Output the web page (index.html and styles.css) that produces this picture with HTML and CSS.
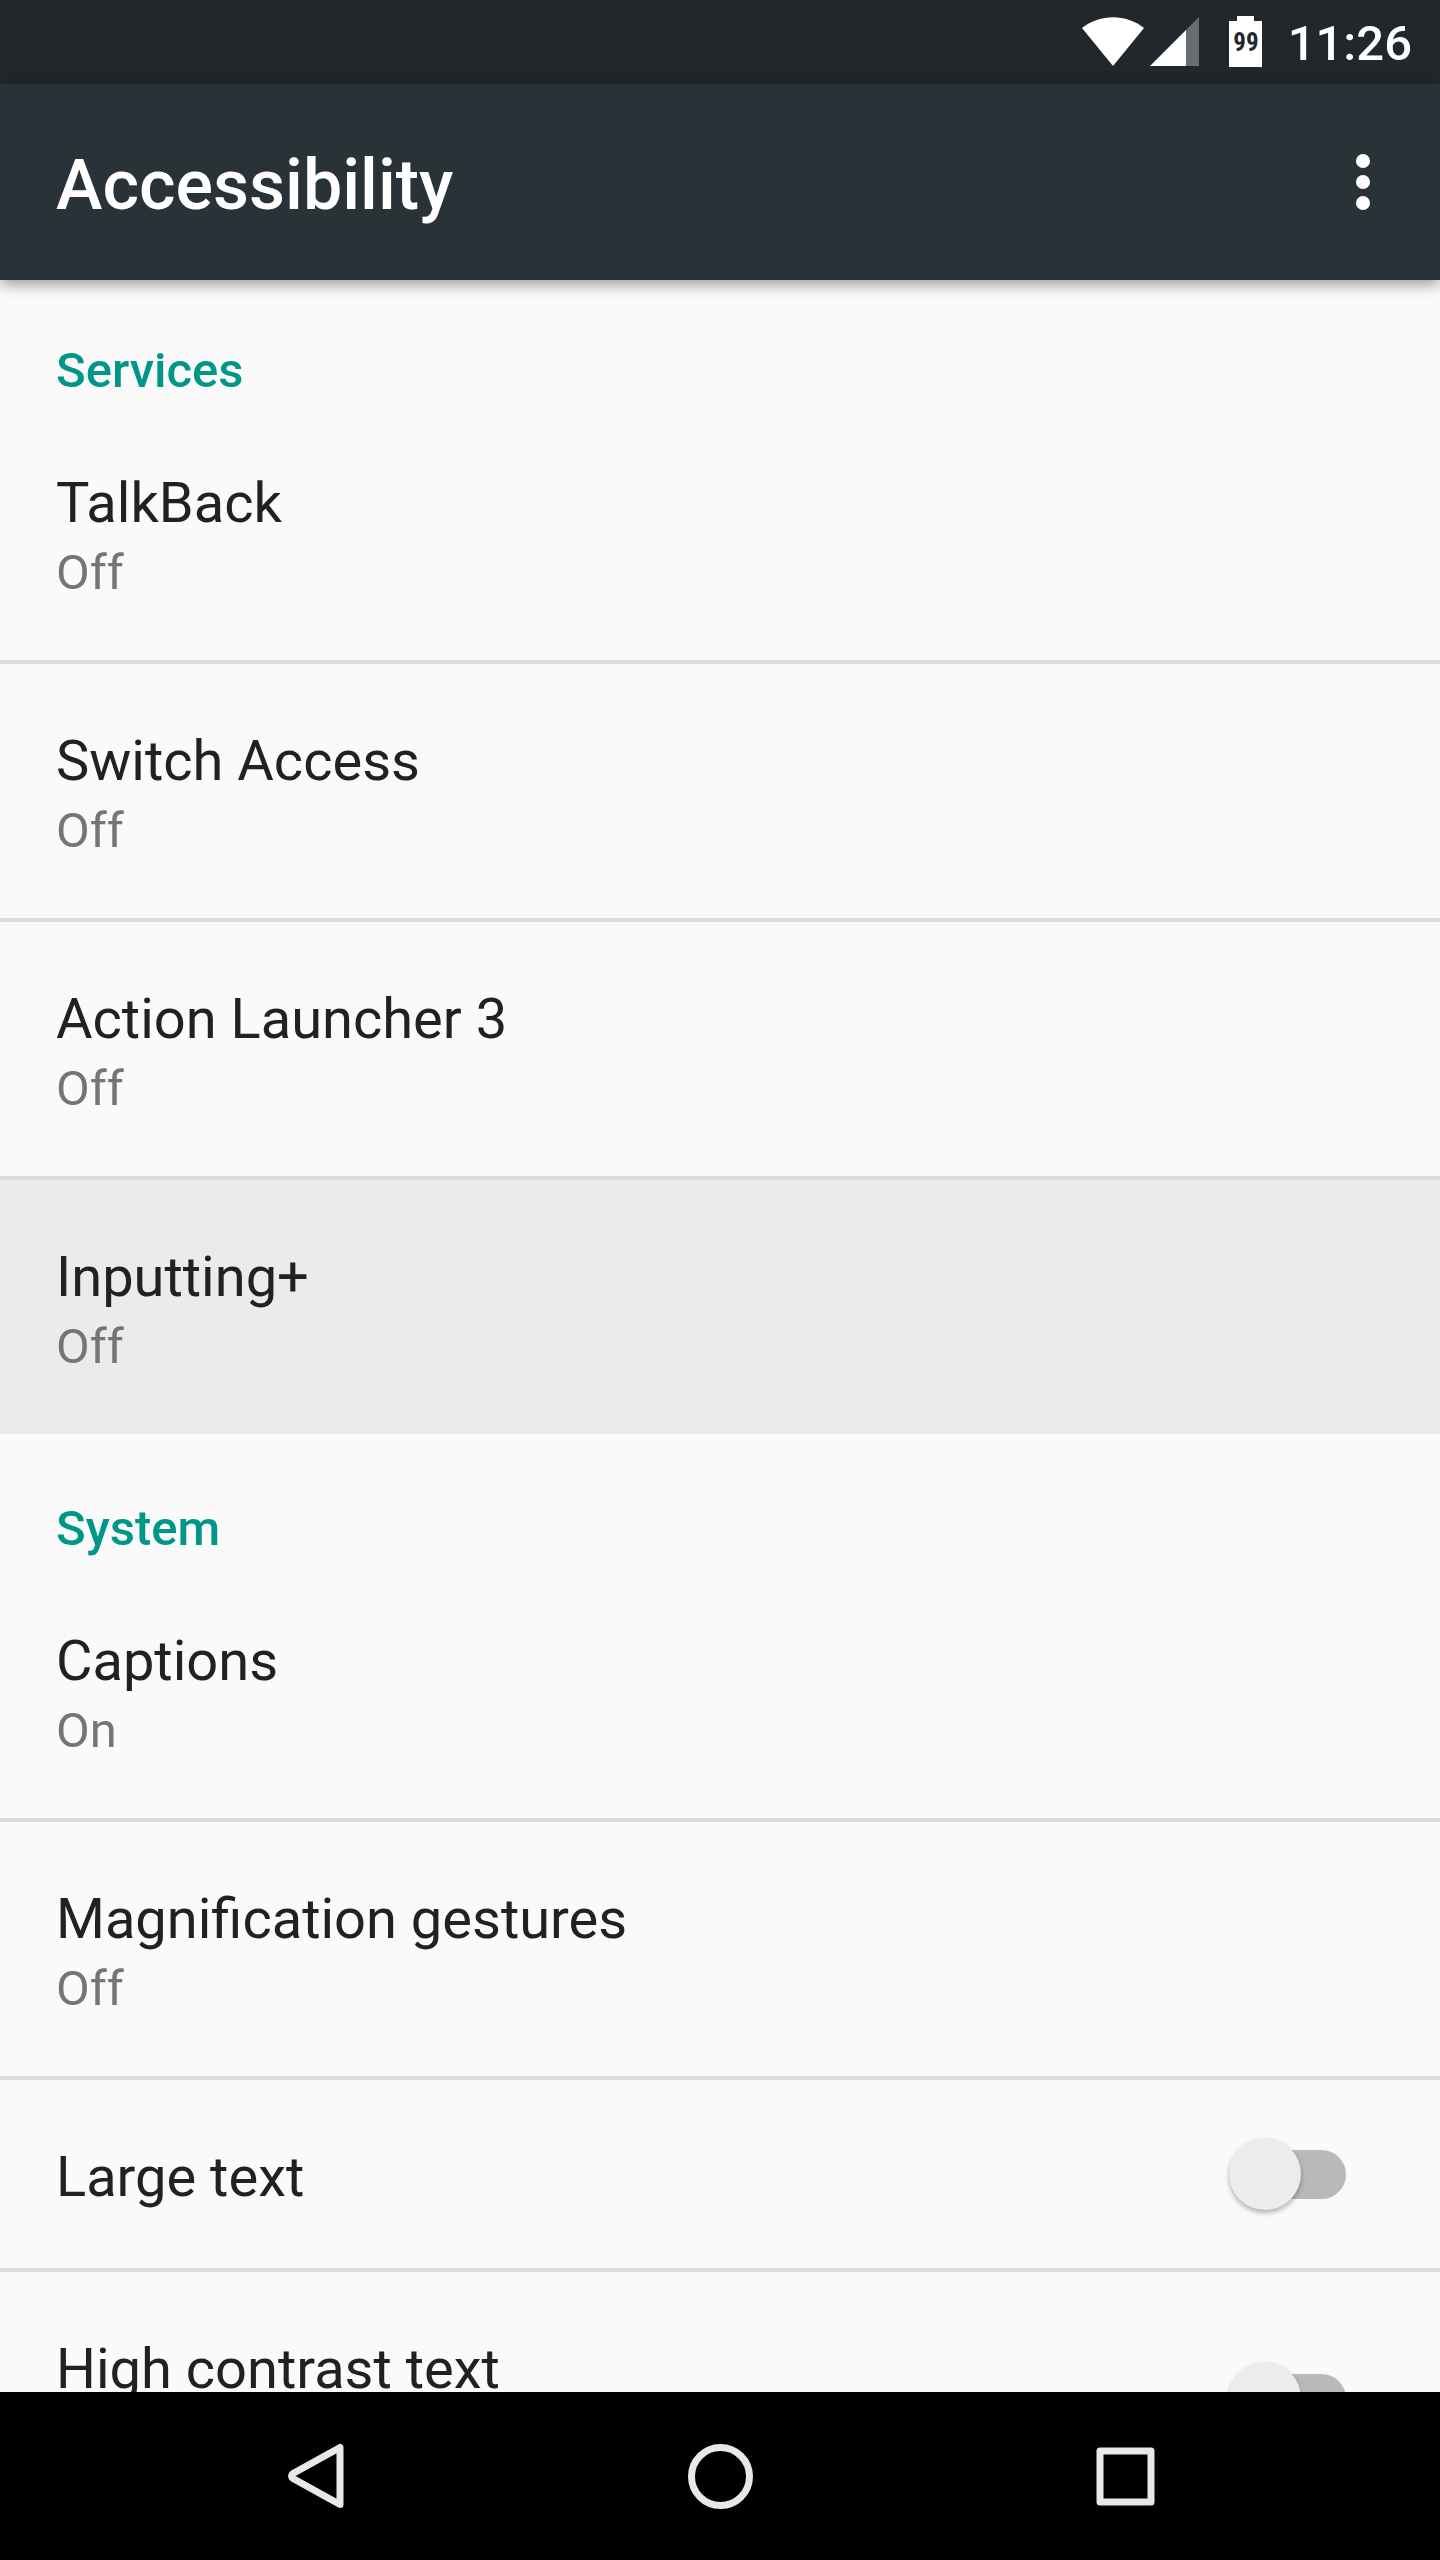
FILE: index.html
```html
<!DOCTYPE html>
<html lang="en">
<head>
    <meta charset="UTF-8">
    <meta name="viewport" content="width=device-width, initial-scale=1.0">
    <title>Accessibility</title>
    <link rel="stylesheet" href="styles.css">
</head>
<body>
    <div class="status-bar">
        <svg class="status-icons" width="184" height="84" viewBox="0 0 184 84" aria-hidden="true">
            <!-- Wifi -->
            <path d="M0 28 C18 13.500 44 13.500 62 28 L31 66 Z" fill="#fff"/>
            <!-- Signal -->
            <path d="M117 17 V66 H104 V30 Z" fill="#6b6e70"/>
            <path d="M104 30 V66 H68 Z" fill="#fff"/>
            <!-- Battery -->
            <path d="M155 16 H172 V21 H180 V67 H147 V21 H155 Z" fill="#fff"/>
            <text class="battery-level" x="164" y="51" text-anchor="middle">99</text>
        </svg>
        <span class="clock">11:26</span>
    </div>

    <header class="app-bar">
        <h1 class="app-title">Accessibility</h1>
        <button type="button" class="menu-btn" aria-label="More options">
            <svg width="84" height="84" viewBox="0 0 84 84" fill="#fff">
                <circle cx="42" cy="21" r="7"/>
                <circle cx="42" cy="42" r="7"/>
                <circle cx="42" cy="63" r="7"/>
            </svg>
        </button>
    </header>

    <main class="settings">
        <section>
            <h2 class="category">Services</h2>
            <a href="#talkback" class="item">
                <span class="item-title">TalkBack</span>
                <span class="item-summary">Off</span>
            </a>
            <a href="#switch-access" class="item">
                <span class="item-title">Switch Access</span>
                <span class="item-summary">Off</span>
            </a>
            <a href="#action-launcher" class="item">
                <span class="item-title">Action Launcher 3</span>
                <span class="item-summary">Off</span>
            </a>
            <a href="#inputting" class="item pressed">
                <span class="item-title">Inputting+</span>
                <span class="item-summary">Off</span>
            </a>
        </section>

        <section>
            <h2 class="category">System</h2>
            <a href="#captions" class="item">
                <span class="item-title">Captions</span>
                <span class="item-summary">On</span>
            </a>
            <a href="#magnification" class="item">
                <span class="item-title">Magnification gestures</span>
                <span class="item-summary">Off</span>
            </a>
            <div class="item switch-item">
                <label class="item-title" for="largeText">Large text</label>
                <input type="checkbox" role="switch" class="switch" id="largeText">
            </div>
            <div class="item switch-item tall">
                <label class="item-title" for="highContrast">High contrast text</label>
                <input type="checkbox" role="switch" class="switch" id="highContrast">
            </div>
        </section>
    </main>

    <nav class="nav-bar">
        <button type="button" class="nav-btn" aria-label="Back">
            <svg width="84" height="84" viewBox="0 0 84 84">
                <path d="M67 13.500 V70.500 L20 44.500 Q17 42 20 39.500 Z"/>
            </svg>
        </button>
        <button type="button" class="nav-btn" aria-label="Home">
            <svg width="84" height="84" viewBox="0 0 84 84">
                <circle cx="42.500" cy="42.500" r="29"/>
            </svg>
        </button>
        <button type="button" class="nav-btn" aria-label="Recent apps">
            <svg width="84" height="84" viewBox="0 0 84 84">
                <rect x="17" y="17" width="51" height="51"/>
            </svg>
        </button>
    </nav>
</body>
</html>
```
FILE: styles.css
```css
* {
    margin: 0;
    padding: 0;
    box-sizing: border-box;
}

body {
    font-family: Roboto, sans-serif;
    background: #fafafa;
    height: 100vh;
    display: flex;
    flex-direction: column;
    overflow: hidden;
}

button {
    background: none;
    border: none;
    cursor: pointer;
}

svg {
    display: block;
}

.status-bar {
    flex: none;
    display: flex;
    justify-content: flex-end;
    align-items: flex-start;
    gap: 22px;
    height: 84px;
    padding-right: 28px;
    background: #22272b;
}

.battery-level {
    font-family: "Roboto Condensed", Roboto, sans-serif;
    font-size: 25px;
    font-weight: 700;
    fill: #22272b;
}

.clock {
    padding-top: 9px;
    font-size: 49px;
    line-height: 70px;
    font-weight: 500;
    color: #fff;
}

.app-bar {
    flex: none;
    display: flex;
    justify-content: space-between;
    align-items: center;
    height: 196px;
    padding: 0 35px 0 56px;
    background: #283237;
    box-shadow: 0 4px 14px rgba(0, 0, 0, 0.4);
    position: relative;
}

.app-title {
    padding-top: 6px;
    font-size: 70px;
    line-height: 84px;
    font-weight: 500;
    color: #fff;
}

.settings {
    flex: 1;
    min-height: 0;
    overflow: hidden;
}

.category {
    padding: 56px 56px 0;
    font-size: 49px;
    line-height: 70px;
    font-weight: 500;
    color: #009688;
}

.item {
    display: flex;
    flex-direction: column;
    padding: 62px 56px 52px;
    border-bottom: 4px solid #dcdcdc;
    text-decoration: none;
}

.item.pressed {
    background: #ebebeb;
    background-clip: padding-box;
    border-bottom-color: transparent;
}

.item-title {
    font-size: 56px;
    line-height: 70px;
    color: #212121;
}

.item-summary {
    font-size: 49px;
    line-height: 70px;
    color: #757575;
}

.switch-item {
    flex-direction: row;
    justify-content: space-between;
    align-items: flex-start;
    padding: 0 94px 0 56px;
}

.switch-item .item-title {
    padding: 62px 0 56px;
}

.switch-item.tall {
    min-height: 256px;
}

.switch {
    appearance: none;
    position: relative;
    align-self: center;
    display: flex;
    align-items: center;
    width: 117px;
    height: 72px;
    cursor: pointer;
}

/* Track */
.switch::before {
    content: "";
    width: 100%;
    height: 49px;
    border-radius: 25px;
    background: #b9b9b9;
}

/* Thumb */
.switch::after {
    content: "";
    position: absolute;
    left: 0;
    width: 72px;
    height: 72px;
    border-radius: 50%;
    background: #ececec;
    box-shadow: 0 3px 5px rgba(0, 0, 0, 0.3);
}

.switch:checked::after {
    left: auto;
    right: 0;
}

.nav-bar {
    flex: none;
    display: grid;
    grid-template-columns: repeat(3, 1fr);
    height: 168px;
    padding: 0 112px;
    background: #000;
}

.nav-btn {
    display: flex;
    justify-content: center;
    align-items: center;
}

.nav-btn svg {
    fill: none;
    stroke: #e8e8e8;
    stroke-width: 7px;
    stroke-linejoin: round;
}
```
